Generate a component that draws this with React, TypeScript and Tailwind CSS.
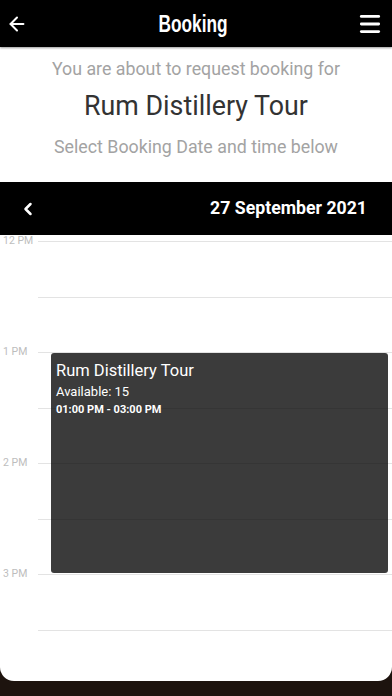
import { ArrowLeft, ChevronLeft, Menu } from "lucide-react";

const rows = ["12 PM", "", "1 PM", "", "2 PM", "", "3 PM", ""];

const App = () => {
  return (
    <div className="h-[696px] w-[392px] overflow-hidden bg-[#1d130e] flex flex-col font-['Roboto',sans-serif]">
      {/* Barra superior */}
      <header className="h-[47px] shrink-0 bg-black flex items-center justify-between pl-[6px] pr-[9px] shadow-[0_1px_2px_rgba(0,0,0,0.4)] z-10">
        <ArrowLeft className="w-[22px] h-[22px] text-white" strokeWidth={2.2} />
        <h1 className="text-white text-[24px] leading-[28px] font-bold scale-x-[0.72] font-['Liberation_Sans',sans-serif]">
          Booking
        </h1>
        <Menu className="w-[26px] h-[26px] text-white" strokeWidth={2.6} />
      </header>

      <main className="flex-1 bg-white rounded-b-[14px] overflow-hidden flex flex-col">
        {/* Introdução */}
        <div className="h-[135px] shrink-0 flex flex-col items-center pt-[11px]">
          <p className="text-[17.8px] leading-[22px] text-[#a3a3a3]">You are about to request booking for</p>
          <p className="text-[26.8px] leading-[32px] text-[#333333] mt-[10px]">Rum Distillery Tour</p>
          <p className="text-[17.8px] leading-[22px] text-[#a3a3a3] mt-[14px]">Select Booking Date and time below</p>
        </div>

        {/* Barra da data */}
        <div className="h-[53px] shrink-0 bg-black flex items-center justify-between pl-[18px] pr-[25px]">
          <ChevronLeft className="w-[20px] h-[20px] text-white" strokeWidth={3} />
          <span className="text-white text-[17.7px] font-bold">27 September 2021</span>
        </div>

        {/* Calendário */}
        <div className="relative flex-1 pt-[6px]">
          {rows.map((label, i) => (
            <div key={i} className="h-[55.5px] flex items-start">
              <div className="w-[38px] shrink-0 relative">
                <span className="absolute left-[3px] -top-[7px] text-[10.5px] leading-[14px] text-[#bdbdbd]">
                  {label}
                </span>
              </div>
              <div className="flex-1 border-t border-[#e3e3e3]" />
            </div>
          ))}

          {/* Evento */}
          <div className="absolute left-[51px] right-[4px] top-[118px] h-[220px] bg-black/[0.77] rounded-[3px] px-[5px] pt-[8px] text-white">
            <p className="text-[16.5px] leading-[20px]">Rum Distillery Tour</p>
            <p className="text-[13px] leading-[17px] mt-[2px]">Available: 15</p>
            <p className="text-[11px] leading-[14px] font-bold mt-[3px]">01:00 PM - 03:00 PM</p>
          </div>
        </div>
      </main>
      <div className="h-[15px] shrink-0" />
    </div>
  );
};

export default App;
